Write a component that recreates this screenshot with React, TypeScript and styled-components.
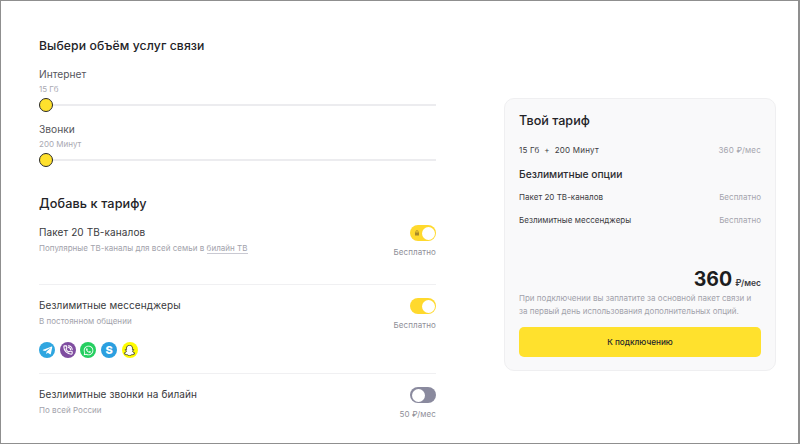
import React from "react";
import styled, { createGlobalStyle } from "styled-components";
import { FaTelegramPlane, FaWhatsapp, FaSnapchatGhost } from "react-icons/fa";
import { PhoneCall } from "lucide-react";

const Global = createGlobalStyle`
  html, body { margin: 0; padding: 0; background: #fff; }
  body { font-family: Inter, "Noto Sans", "Liberation Sans", sans-serif; color: #26262b; }
`;

const Page = styled.div`
  width: 800px;
  height: 444px;
  box-sizing: border-box;
  border: 1px solid #8f8f8f;
  border-right-width: 2px;
  display: flex;
  align-items: flex-start;
  padding-left: 38px;
  overflow: hidden;
`;

const Left = styled.div`
  width: 397px;
  display: flex;
  flex-direction: column;
  padding-top: 37px;
`;

const Heading = styled.h2`
  margin: 0;
  font-size: 12.2px;
  line-height: 16px;
  font-weight: 500;
  letter-spacing: 0.1px;
  color: #232327;
`;

const Sliders = styled.div`
  margin-top: 13px;
  display: flex;
  flex-direction: column;
  gap: 9px;
`;

const SliderBlock = styled.div`
  display: flex;
  flex-direction: column;
`;

const SliderTitle = styled.div`
  font-size: 10.2px;
  line-height: 14px;
  color: #55555c;
`;

const SliderValue = styled.div`
  font-size: 8px;
  line-height: 10px;
  margin-top: 3px;
  color: #a9a9b2;
`;

const Track = styled.div`
  position: relative;
  height: 16px;
  margin-top: 3px;
  display: flex;
  align-items: center;
  &::before {
    content: "";
    flex: 1;
    height: 2px;
    background: #ececef;
  }
`;

const Thumb = styled.span`
  position: absolute;
  left: 0;
  top: 1px;
  width: 14px;
  height: 14px;
  box-sizing: border-box;
  border-radius: 50%;
  background: #ffe12d;
  border: 1.5px solid #2a2a2a;
`;

const AddHeading = styled(Heading)`
  font-size: 12.7px;
  margin-top: 28px;
  margin-bottom: 13px;
`;

const Option = styled.div<{ $last?: boolean }>`
  display: flex;
  justify-content: space-between;
  align-items: flex-start;
  min-height: 44px;
  padding-bottom: ${(p) => (p.$last ? "0" : "15px")};
  border-bottom: ${(p) => (p.$last ? "none" : "1px solid #f0f0f2")};
  margin-bottom: 13px;
`;

const OptionText = styled.div`
  display: flex;
  flex-direction: column;
`;

const OptionTitle = styled.div`
  font-size: 10px;
  line-height: 14px;
  color: #3a3a40;
  letter-spacing: 0.1px;
`;

const OptionDesc = styled.div`
  margin-top: 3px;
  font-size: 8px;
  line-height: 12px;
  color: #a2a2ab;
  letter-spacing: 0.03px;
`;

const DescLink = styled.span`
  border-bottom: 1px solid #c9c9d2;
`;

const Side = styled.div`
  display: flex;
  flex-direction: column;
  align-items: flex-end;
`;

const Toggle = styled.div<{ $on?: boolean }>`
  position: relative;
  width: 26px;
  height: 16px;
  border-radius: 8px;
  background: ${(p) => (p.$on ? "#ffd92d" : "#8a8a9e")};
  &::after {
    content: "";
    position: absolute;
    top: 1.5px;
    left: ${(p) => (p.$on ? "11.5px" : "1.5px")};
    width: 13px;
    height: 13px;
    border-radius: 50%;
    background: #fff;
  }
`;

const Lock = styled.svg`
  position: absolute;
  left: 4px;
  top: 5px;
  width: 6px;
  height: 6px;
`;

const Price = styled.div`
  margin-top: 3px;
  font-size: 8px;
  line-height: 16px;
  color: #8f8f98;
  letter-spacing: 0.1px;
`;

const Messengers = styled.div`
  display: flex;
  gap: 4.7px;
  margin-top: 15px;
`;

const Round = styled.span<{ $bg: string }>`
  width: 16px;
  height: 16px;
  border-radius: 50%;
  background: ${(p) => p.$bg};
  color: #fff;
  display: flex;
  align-items: center;
  justify-content: center;
  font-size: 11px;
  font-weight: 800;
`;

const Card = styled.aside`
  width: 272px;
  height: 273px;
  box-sizing: border-box;
  margin: 97px 0 0 68px;
  padding: 14px 14px 13px;
  background: #f9f9fa;
  border: 1px solid #efeff1;
  border-radius: 10px;
  display: flex;
  flex-direction: column;
`;

const CardTitle = styled.div`
  font-size: 12.6px;
  line-height: 16px;
  font-weight: 500;
  color: #232327;
`;

const CardRow = styled.div`
  display: flex;
  justify-content: space-between;
  font-size: 8px;
  line-height: 12px;
  color: #3c3c42;
  letter-spacing: 0.03px;
`;

const Sum = styled(CardRow)`
  margin-top: 15px;
  letter-spacing: 0.2px;
`;

const Muted = styled.span`
  color: #a5a5ae;
`;

const CardSub = styled.div`
  margin-top: 11px;
  margin-bottom: 10px;
  font-size: 10.3px;
  line-height: 14px;
  font-weight: 500;
  color: #2c2c31;
`;

const CardRows = styled.div`
  display: flex;
  flex-direction: column;
  gap: 11px;
`;

const Total = styled.div`
  margin-top: auto;
  display: flex;
  justify-content: flex-end;
  align-items: baseline;
  gap: 3px;
  color: #1d1d20;
`;

const TotalNum = styled.span`
  font-size: 19.5px;
  line-height: 24px;
  font-weight: 700;
`;

const TotalUnit = styled.span`
  font-size: 8.5px;
  font-weight: 600;
  color: #3c3c42;
`;

const Note = styled.p`
  margin: 1px 0 0;
  font-size: 8px;
  line-height: 13px;
  color: #a2a2ab;
  letter-spacing: 0.01px;
  white-space: nowrap;
`;

const ConnectButton = styled.button`
  margin-top: 9px;
  height: 30px;
  border: none;
  border-radius: 5px;
  background: #ffe12d;
  font-family: inherit;
  font-size: 8.2px;
  font-weight: 500;
  color: #26262b;
`;

const Slider = ({ title, value }: { title: string; value: string }) => (
  <SliderBlock>
    <SliderTitle>{title}</SliderTitle>
    <SliderValue>{value}</SliderValue>
    <Track><Thumb /></Track>
  </SliderBlock>
);

export default function App() {
  return (
    <>
      <Global />
      <Page>
        <Left>
          <Heading>Выбери объём услуг связи</Heading>
          <Sliders>
            <Slider title="Интернет" value="15 Гб" />
            <Slider title="Звонки" value="200 Минут" />
          </Sliders>
          <AddHeading>Добавь к тарифу</AddHeading>
          <Option>
            <OptionText>
              <OptionTitle>Пакет 20 ТВ-каналов</OptionTitle>
              <OptionDesc>Популярные ТВ-каналы для всей семьи в <DescLink>билайн ТВ</DescLink></OptionDesc>
            </OptionText>
            <Side>
              <Toggle $on>
                <Lock viewBox="0 0 12 12">
                  <path d="M3 5V3.5a3 3 0 0 1 6 0V5h1v6H2V5h1zm1.5 0h3V3.500a1.500 1.500 0 0 0-3 0V5z" fill="#a8892a" />
                </Lock>
              </Toggle>
              <Price>Бесплатно</Price>
            </Side>
          </Option>
          <Option>
            <OptionText>
              <OptionTitle>Безлимитные мессенджеры</OptionTitle>
              <OptionDesc>В постоянном общении</OptionDesc>
              <Messengers>
                <Round $bg="#2fa6e0"><FaTelegramPlane /></Round>
                <Round $bg="#7f4da0"><PhoneCall size={10} strokeWidth={2.6} /></Round>
                <Round $bg="#25cf60"><FaWhatsapp /></Round>
                <Round $bg="#2b9fe0">S</Round>
                <Round $bg="#fffc00"><FaSnapchatGhost stroke="#222" strokeWidth={36} /></Round>
              </Messengers>
            </OptionText>
            <Side>
              <Toggle $on />
              <Price>Бесплатно</Price>
            </Side>
          </Option>
          <Option $last>
            <OptionText>
              <OptionTitle>Безлимитные звонки на билайн</OptionTitle>
              <OptionDesc>По всей России</OptionDesc>
            </OptionText>
            <Side>
              <Toggle />
              <Price>50 ₽/мес</Price>
            </Side>
          </Option>
        </Left>
        <Card>
          <CardTitle>Твой тариф</CardTitle>
          <Sum>
            <span>15 Гб&nbsp; + &nbsp;200 Минут</span>
            <Muted>360 ₽/мес</Muted>
          </Sum>
          <CardSub>Безлимитные опции</CardSub>
          <CardRows>
            <CardRow><span>Пакет 20 ТВ-каналов</span><Muted>Бесплатно</Muted></CardRow>
            <CardRow><span>Безлимитные мессенджеры</span><Muted>Бесплатно</Muted></CardRow>
          </CardRows>
          <Total>
            <TotalNum>360</TotalNum>
            <TotalUnit>₽/мес</TotalUnit>
          </Total>
          <Note>
            При подключении вы заплатите за основной пакет связи и<br />
            за первый день использования дополнительных опций.
          </Note>
          <ConnectButton>К подключению</ConnectButton>
        </Card>
      </Page>
    </>
  );
}
